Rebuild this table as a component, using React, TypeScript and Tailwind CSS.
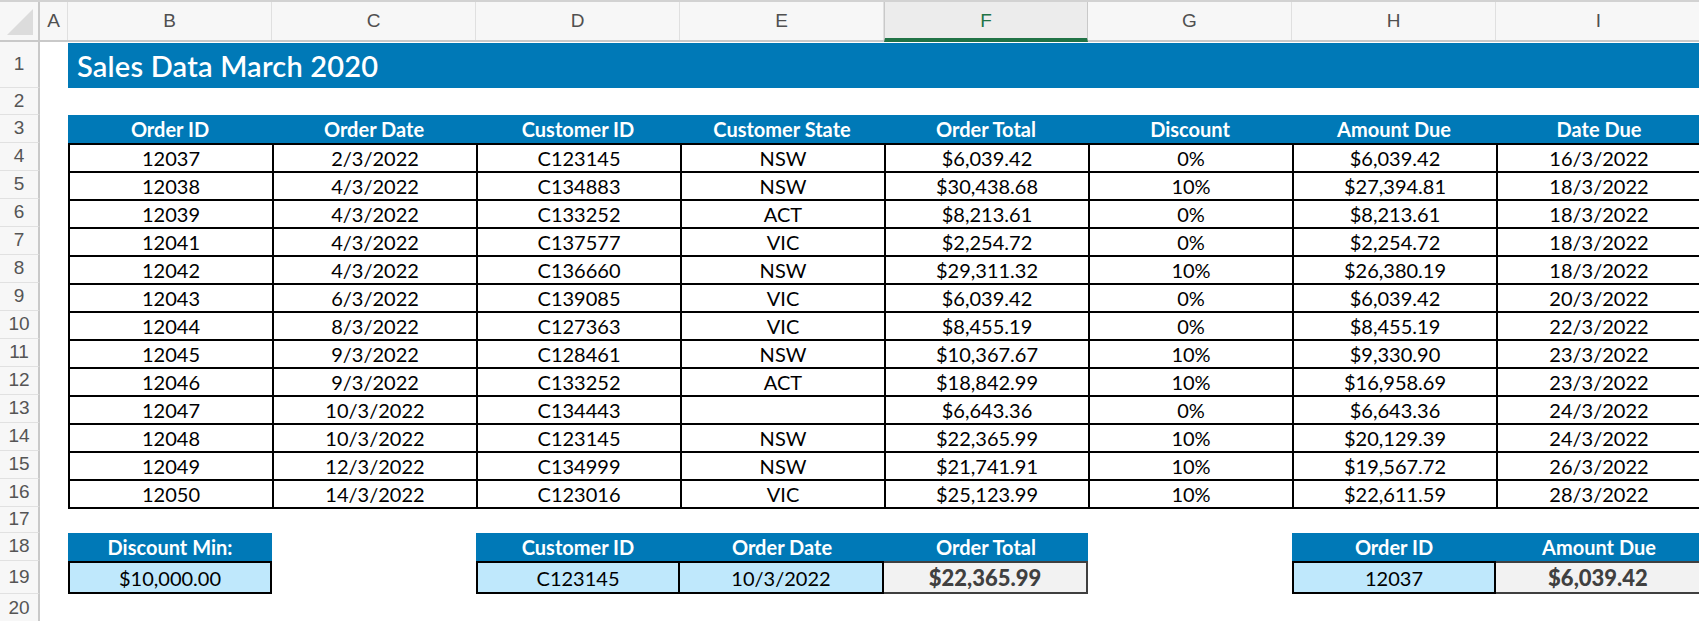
import React from "react";

const COLS = ["B", "C", "D", "E", "F", "G", "H", "I"];

const DATA: string[][] = [
  ["12037", "2/3/2022", "C123145", "NSW", "$6,039.42", "0%", "$6,039.42", "16/3/2022"],
  ["12038", "4/3/2022", "C134883", "NSW", "$30,438.68", "10%", "$27,394.81", "18/3/2022"],
  ["12039", "4/3/2022", "C133252", "ACT", "$8,213.61", "0%", "$8,213.61", "18/3/2022"],
  ["12041", "4/3/2022", "C137577", "VIC", "$2,254.72", "0%", "$2,254.72", "18/3/2022"],
  ["12042", "4/3/2022", "C136660", "NSW", "$29,311.32", "10%", "$26,380.19", "18/3/2022"],
  ["12043", "6/3/2022", "C139085", "VIC", "$6,039.42", "0%", "$6,039.42", "20/3/2022"],
  ["12044", "8/3/2022", "C127363", "VIC", "$8,455.19", "0%", "$8,455.19", "22/3/2022"],
  ["12045", "9/3/2022", "C128461", "NSW", "$10,367.67", "10%", "$9,330.90", "23/3/2022"],
  ["12046", "9/3/2022", "C133252", "ACT", "$18,842.99", "10%", "$16,958.69", "23/3/2022"],
  ["12047", "10/3/2022", "C134443", "", "$6,643.36", "0%", "$6,643.36", "24/3/2022"],
  ["12048", "10/3/2022", "C123145", "NSW", "$22,365.99", "10%", "$20,129.39", "24/3/2022"],
  ["12049", "12/3/2022", "C134999", "NSW", "$21,741.91", "10%", "$19,567.72", "26/3/2022"],
  ["12050", "14/3/2022", "C123016", "VIC", "$25,123.99", "10%", "$22,611.59", "28/3/2022"],
];

const HEADERS = ["Order ID", "Order Date", "Customer ID", "Customer State", "Order Total", "Discount", "Amount Due", "Date Due"];

const FONT = { fontFamily: "Lato, 'Open Sans', sans-serif" };

function RowLabel({ n }: { n: number }) {
  return (
    <div className="w-[40px] shrink-0 h-full bg-[#f7f7f7] border-r-2 border-r-[#c9c9c9] border-b border-b-[#e1e1e1] flex items-center justify-center text-[19px] text-[#555] font-['Liberation_Sans',sans-serif]">
      {n}
    </div>
  );
}

function ColA() {
  return <div className="w-[28px] shrink-0 h-full" />;
}

function Empty({ last }: { last?: boolean }) {
  return <div className={last ? "w-[206px] shrink-0 h-full" : "w-[204px] shrink-0 h-full"} />;
}

const HDR = "shrink-0 h-full bg-[#0079b7] text-white text-[20px] font-bold flex items-center justify-center";

export default function App() {
  return (
    <div className="w-[1699px] h-[621px] overflow-hidden bg-white" style={FONT}>
      <div className="w-[1702px]">
        {/* column headers */}
        <div className="flex h-[42px] border-t-2 border-t-[#d2d2d2] border-b-2 border-b-[#c9c9c9] bg-[#f7f7f7] font-['Liberation_Sans',sans-serif] text-[19px] text-[#505050]">
          <div className="w-[40px] shrink-0 h-full border-r-2 border-r-[#c9c9c9] relative">
            <div className="absolute right-[5px] bottom-[5px] w-0 h-0 border-l-[26px] border-l-transparent border-b-[26px] border-b-[#dcdcdc]" />
          </div>
          <div className="w-[28px] shrink-0 h-full flex items-center justify-center border-r border-r-[#e0e0e0]">A</div>
          {COLS.map((c, i) =>
            c === "F" ? (
              <div key={c} className="w-[204px] shrink-0 h-[40px] -mb-[2px] flex items-center justify-center bg-[#ececec] border-l border-l-[#c9c9c9] border-r border-r-[#c9c9c9] border-b-[4px] border-b-[#217346] text-[#217346]">
                <span className="-mb-[2px]">{c}</span>
              </div>
            ) : (
              <div
                key={c}
                className={
                  (i === COLS.length - 1 ? "w-[206px]" : "w-[204px]") +
                  " shrink-0 h-full flex items-center justify-center border-r border-r-[#e0e0e0]"
                }
              >
                {c}
              </div>
            )
          )}
        </div>

        {/* row 1 title */}
        <div className="flex h-[46px]">
          <RowLabel n={1} />
          <ColA />
          <div className="flex-1 h-full pt-[1px]">
            <div className="h-full bg-[#0079b7] flex items-center pl-[9px] text-white text-[29px] font-semibold tracking-[0.2px]">
              Sales Data March 2020
            </div>
          </div>
        </div>

        {/* row 2 */}
        <div className="flex h-[27px]">
          <RowLabel n={2} />
        </div>

        {/* row 3 header */}
        <div className="flex h-[28px]">
          <RowLabel n={3} />
          <ColA />
          {HEADERS.map((h, i) => (
            <div key={h} className={(i === HEADERS.length - 1 ? "w-[206px] " : "w-[204px] ") + HDR}>
              {h}
            </div>
          ))}
        </div>

        {/* data rows */}
        {DATA.map((row, r) => (
          <div key={r} className="flex h-[28px]">
            <RowLabel n={4 + r} />
            <ColA />
            {row.map((v, i) => (
              <div
                key={i}
                className={
                  (i === row.length - 1 ? "w-[206px] border-r-2" : "w-[204px]") +
                  " shrink-0 border-l-2 border-t-2 border-black flex items-center justify-center text-[20px] text-black leading-none " +
                  (r === DATA.length - 1 ? "h-[30px] border-b-2" : "h-full")
                }
              >
                {v}
              </div>
            ))}
          </div>
        ))}

        {/* row 17 */}
        <div className="flex h-[26px]">
          <RowLabel n={17} />
        </div>

        {/* row 18 headers */}
        <div className="flex h-[28px]">
          <RowLabel n={18} />
          <ColA />
          <div className={"w-[204px] " + HDR}>Discount Min:</div>
          <Empty />
          {["Customer ID", "Order Date", "Order Total"].map((h) => (
            <div key={h} className={"w-[204px] " + HDR}>
              {h}
            </div>
          ))}
          <Empty />
          <div className={"w-[204px] " + HDR}>Order ID</div>
          <div className={"w-[206px] " + HDR}>Amount Due</div>
        </div>

        {/* row 19 values */}
        <div className="flex h-[33px]">
          <RowLabel n={19} />
          <ColA />
          <div className="w-[204px] shrink-0 h-full bg-[#bfe8fc] border-2 border-black flex items-center justify-center text-[20px] text-black">
            $10,000.00
          </div>
          <Empty />
          <div className="w-[204px] shrink-0 h-full bg-[#bfe8fc] border-2 border-black flex items-center justify-center text-[20px] text-black">
            C123145
          </div>
          <div className="w-[204px] shrink-0 h-full bg-[#bfe8fc] border-y-2 border-r-2 border-black flex items-center justify-center text-[20px] text-black">
            10/3/2022
          </div>
          <div className="w-[204px] shrink-0 h-full bg-[#f2f2f2] border-y-2 border-r-2 border-[#404040] flex items-center justify-center text-[22px] font-black text-[#404040]">
            $22,365.99
          </div>
          <Empty />
          <div className="w-[204px] shrink-0 h-full bg-[#bfe8fc] border-2 border-black flex items-center justify-center text-[20px] text-black">
            12037
          </div>
          <div className="w-[206px] shrink-0 h-full bg-[#f2f2f2] border-y-2 border-r-2 border-[#404040] flex items-center justify-center text-[22px] font-black text-[#404040]">
            $6,039.42
          </div>
        </div>

        {/* row 20 */}
        <div className="flex h-[30px]">
          <RowLabel n={20} />
        </div>
      </div>
    </div>
  );
}
